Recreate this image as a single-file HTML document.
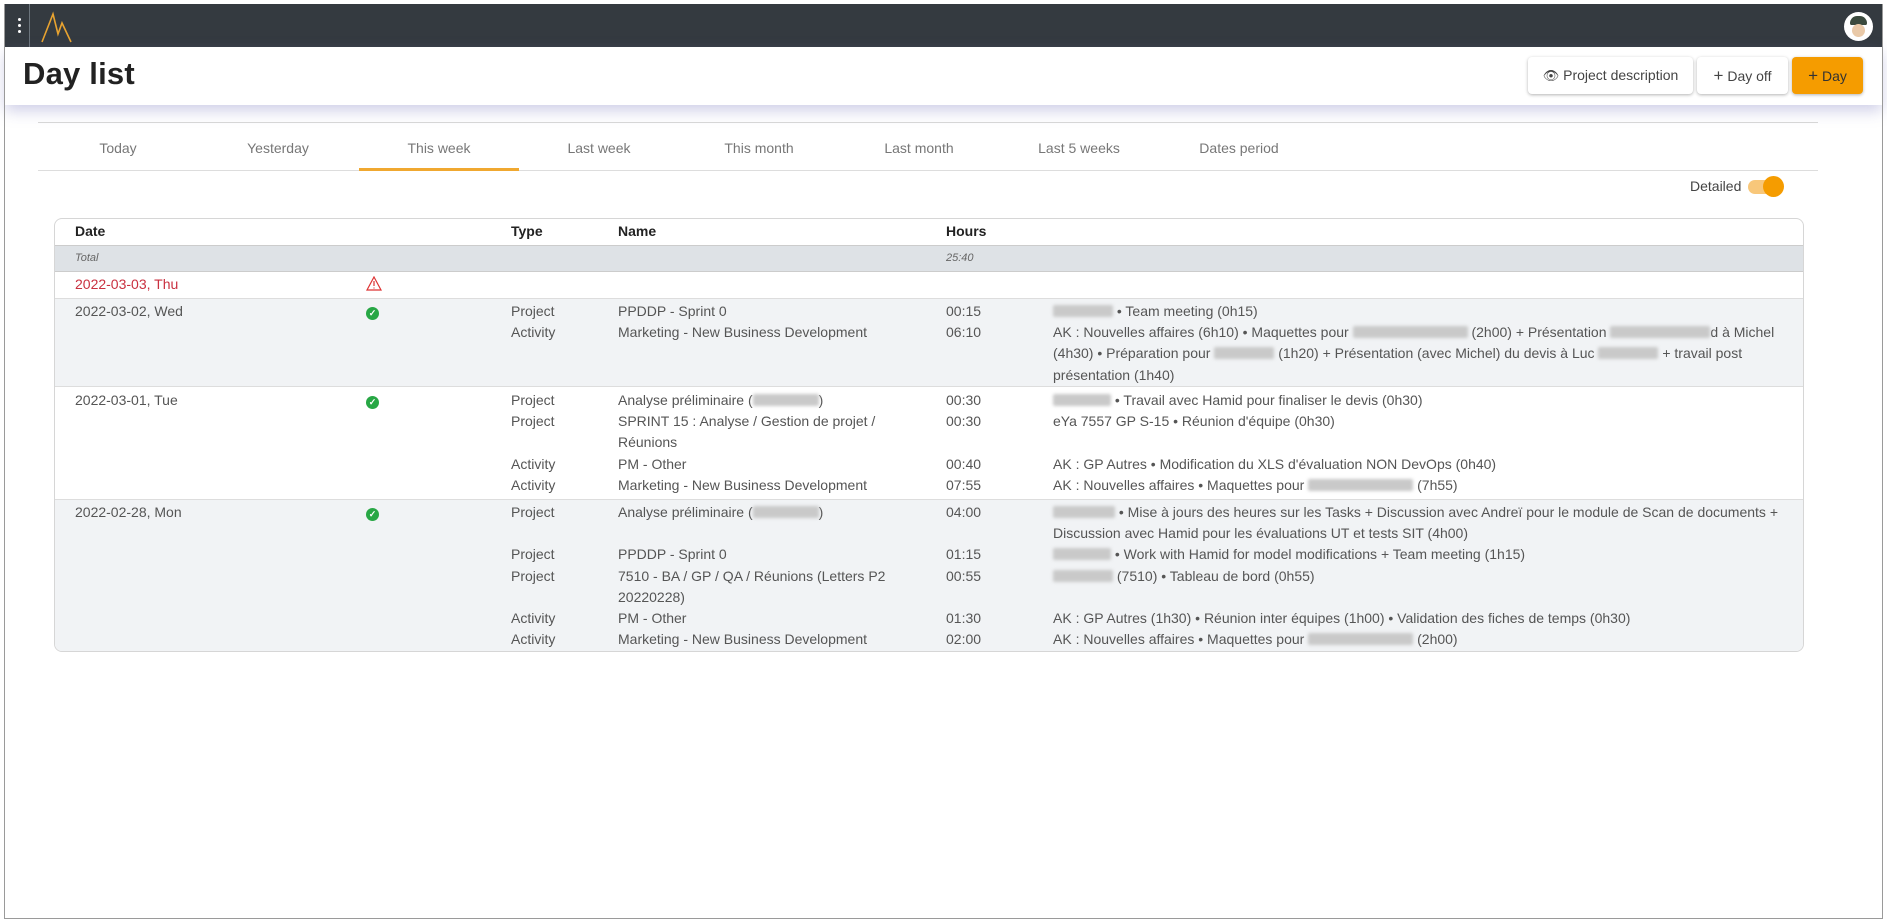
<!DOCTYPE html>
<html><head><meta charset="utf-8"><style>
*{box-sizing:border-box;margin:0;padding:0}
body{width:1887px;height:924px;background:#fff;font-family:"Liberation Sans",Arial,sans-serif;position:relative;overflow:hidden;color:#555}
.frame{position:absolute;left:4px;top:4px;width:1879px;height:915px;border:1px solid #9a9a9a;border-top:none}
.top{position:absolute;left:4px;top:4px;width:1878px;height:43px;background:#343a40}
.dots{position:absolute;left:14px;top:14px;width:4px}
.dots i{display:block;width:3px;height:3px;background:#fff;border-radius:50%;margin-bottom:3px}
.sep{position:absolute;left:29px;top:4px;width:1px;height:43px;background:#6c757d}
.header{position:absolute;left:5px;top:47px;width:1877px;height:58px;background:#fff;box-shadow:0 6px 14px rgba(120,120,190,.35)}
h1{position:absolute;left:23px;top:56px;font-size:31px;font-weight:600;color:#222;letter-spacing:.2px}
.btn{position:absolute;top:57px;height:37px;background:#fff;border-radius:4px;box-shadow:0 1px 3px rgba(0,0,0,.3);font-size:14px;color:#444;line-height:37px;text-align:center}
.tabs{position:absolute;left:38px;top:122px;width:1780px;height:49px;border-top:1px solid #d6d6d6;border-bottom:1px solid #ddd}
.tab{position:absolute;top:17px;width:160px;text-align:center;font-size:14px;color:#777}
.ul{position:absolute;left:359px;top:168px;width:160px;height:3px;background:#f0a830}
.tbl{position:absolute;left:54px;top:218px;width:1750px;height:434px;border:1px solid #d6d6d6;border-radius:8px;overflow:hidden;font-size:14px}
.r{position:absolute;left:0;width:100%}
.c{position:absolute;white-space:nowrap;line-height:21.2px}
.blur{display:inline-block;height:12px;background:#c9c9c9;filter:blur(1.5px);vertical-align:-1px;border-radius:2px}
.ok{display:inline-block;width:13px;height:13px;border-radius:50%;background:#28a745;color:#fff;font-size:9px;line-height:13px;text-align:center;font-weight:bold}
</style></head><body>
<div class="top">
 <div class="dots"><i></i><i></i><i></i></div>
 <svg style="position:absolute;left:32px;top:0px" width="36" height="40" viewBox="0 0 36 40"><path d="M6 38 L17 10 L22 30 L26 19 L35 38" fill="none" stroke="#e8a330" stroke-width="1.6"/></svg>
 <div style="position:absolute;left:1840px;top:8px;width:29px;height:29px;border-radius:50%;background:#fff;overflow:hidden"><div style="position:absolute;left:6px;top:4px;width:17px;height:9px;background:#3b4a3e;border-radius:8px 8px 2px 2px"></div><div style="position:absolute;left:8px;top:12px;width:13px;height:13px;background:#e9c9a8;border-radius:50%"></div></div>
</div>
<div class="sep"></div>
<div class="header"></div>
<h1>Day list</h1>
<div class="btn" style="left:1528px;width:165px"><span style="font-size:13px">&#128065;</span> Project description</div>
<div class="btn" style="left:1697px;width:91px"><b style="font-size:17px;font-weight:400">+</b> Day off</div>
<div class="btn" style="left:1792px;width:71px;background:#f59c00;color:#333"><b style="font-size:17px;font-weight:400">+</b> Day</div>
<div class="tabs">
 <div class="tab" style="left:0">Today</div><div class="tab" style="left:160px">Yesterday</div><div class="tab" style="left:321px">This week</div><div class="tab" style="left:481px">Last week</div><div class="tab" style="left:641px">This month</div><div class="tab" style="left:801px">Last month</div><div class="tab" style="left:961px">Last 5 weeks</div><div class="tab" style="left:1121px">Dates period</div>
</div>
<div class="ul"></div>
<div style="position:absolute;left:1690px;top:178px;font-size:14px;color:#444">Detailed</div>
<div style="position:absolute;left:1748px;top:180px;width:32px;height:14px;border-radius:7px;background:#f8c77a"></div>
<div style="position:absolute;left:1763px;top:176px;width:21px;height:21px;border-radius:50%;background:#f59c00"></div>

<div class="tbl">
 <div class="r" style="top:0;height:26px;color:#222;font-weight:bold">
  <div class="c" style="left:20px;top:2px">Date</div><div class="c" style="left:456px;top:2px">Type</div><div class="c" style="left:563px;top:2px">Name</div><div class="c" style="left:891px;top:2px">Hours</div>
 </div>
 <div class="r" style="top:26px;height:27px;background:#dee2e6;border-top:1px solid #ccc;border-bottom:1px solid #ccc;font-style:italic;font-size:11px;color:#666">
  <div class="c" style="left:20px;top:2px">Total</div><div class="c" style="left:891px;top:2px">25:40</div>
 </div>
 <div class="r" style="top:53px;height:26px">
  <div class="c" style="left:20px;top:2px;color:#c9303f">2022-03-03, Thu</div>
  <svg style="position:absolute;left:311px;top:4px" width="16" height="15" viewBox="0 0 16 15"><path d="M8 1 L15 14 L1 14 Z" fill="none" stroke="#d33" stroke-width="1.2"/><path d="M8 5 V10 M8 11.5 V12.5" stroke="#d33" stroke-width="1.2"/></svg>
 </div>
 <div class="r" style="top:79px;height:89px;background:#f1f3f5;border-top:1px solid #ddd;border-bottom:1px solid #ddd">
  <div class="c" style="left:20px;top:2px">2022-03-02, Wed</div><div class="c" style="left:311px;top:2px"><span class="ok">✓</span></div>
  <div class="c" style="left:456px;top:2px">Project<br>Activity</div>
  <div class="c" style="left:563px;top:2px">PPDDP - Sprint 0<br>Marketing - New Business Development</div>
  <div class="c" style="left:891px;top:2px">00:15<br>06:10</div>
  <div class="c" style="left:998px;top:2px"><span class="blur" style="width:60px"></span> • Team meeting (0h15)<br>AK : Nouvelles affaires (6h10) • Maquettes pour <span class="blur" style="width:115px"></span> (2h00) + Présentation <span class="blur" style="width:100px"></span>d à Michel<br>(4h30) • Préparation pour <span class="blur" style="width:60px"></span> (1h20) + Présentation (avec Michel) du devis à Luc <span class="blur" style="width:60px"></span> + travail post<br>présentation (1h40)</div>
 </div>
 <div class="r" style="top:168px;height:112px">
  <div class="c" style="left:20px;top:3px">2022-03-01, Tue</div><div class="c" style="left:311px;top:3px"><span class="ok">✓</span></div>
  <div class="c" style="left:456px;top:3px">Project<br>Project<br><br>Activity<br>Activity</div>
  <div class="c" style="left:563px;top:3px">Analyse préliminaire (<span class="blur" style="width:66px"></span>)<br>SPRINT 15 : Analyse / Gestion de projet /<br>Réunions<br>PM - Other<br>Marketing - New Business Development</div>
  <div class="c" style="left:891px;top:3px">00:30<br>00:30<br><br>00:40<br>07:55</div>
  <div class="c" style="left:998px;top:3px"><span class="blur" style="width:58px"></span> • Travail avec Hamid pour finaliser le devis (0h30)<br>eYa 7557 GP S-15 • Réunion d'équipe (0h30)<br><br>AK : GP Autres • Modification du XLS d'évaluation NON DevOps (0h40)<br>AK : Nouvelles affaires • Maquettes pour <span class="blur" style="width:105px"></span> (7h55)</div>
 </div>
 <div class="r" style="top:280px;height:154px;background:#f1f3f5;border-top:1px solid #ddd">
  <div class="c" style="left:20px;top:2px">2022-02-28, Mon</div><div class="c" style="left:311px;top:2px"><span class="ok">✓</span></div>
  <div class="c" style="left:456px;top:2px">Project<br><br>Project<br>Project<br><br>Activity<br>Activity</div>
  <div class="c" style="left:563px;top:2px">Analyse préliminaire (<span class="blur" style="width:66px"></span>)<br><br>PPDDP - Sprint 0<br>7510 - BA / GP / QA / Réunions (Letters P2<br>20220228)<br>PM - Other<br>Marketing - New Business Development</div>
  <div class="c" style="left:891px;top:2px">04:00<br><br>01:15<br>00:55<br><br>01:30<br>02:00</div>
  <div class="c" style="left:998px;top:2px"><span class="blur" style="width:62px"></span> • Mise à jours des heures sur les Tasks + Discussion avec Andreï pour le module de Scan de documents +<br>Discussion avec Hamid pour les évaluations UT et tests SIT (4h00)<br><span class="blur" style="width:58px"></span> • Work with Hamid for model modifications + Team meeting (1h15)<br><span class="blur" style="width:60px"></span> (7510) • Tableau de bord (0h55)<br><br>AK : GP Autres (1h30) • Réunion inter équipes (1h00) • Validation des fiches de temps (0h30)<br>AK : Nouvelles affaires • Maquettes pour <span class="blur" style="width:105px"></span> (2h00)</div>
 </div>
</div>
<div class="frame"></div>
</body></html>
